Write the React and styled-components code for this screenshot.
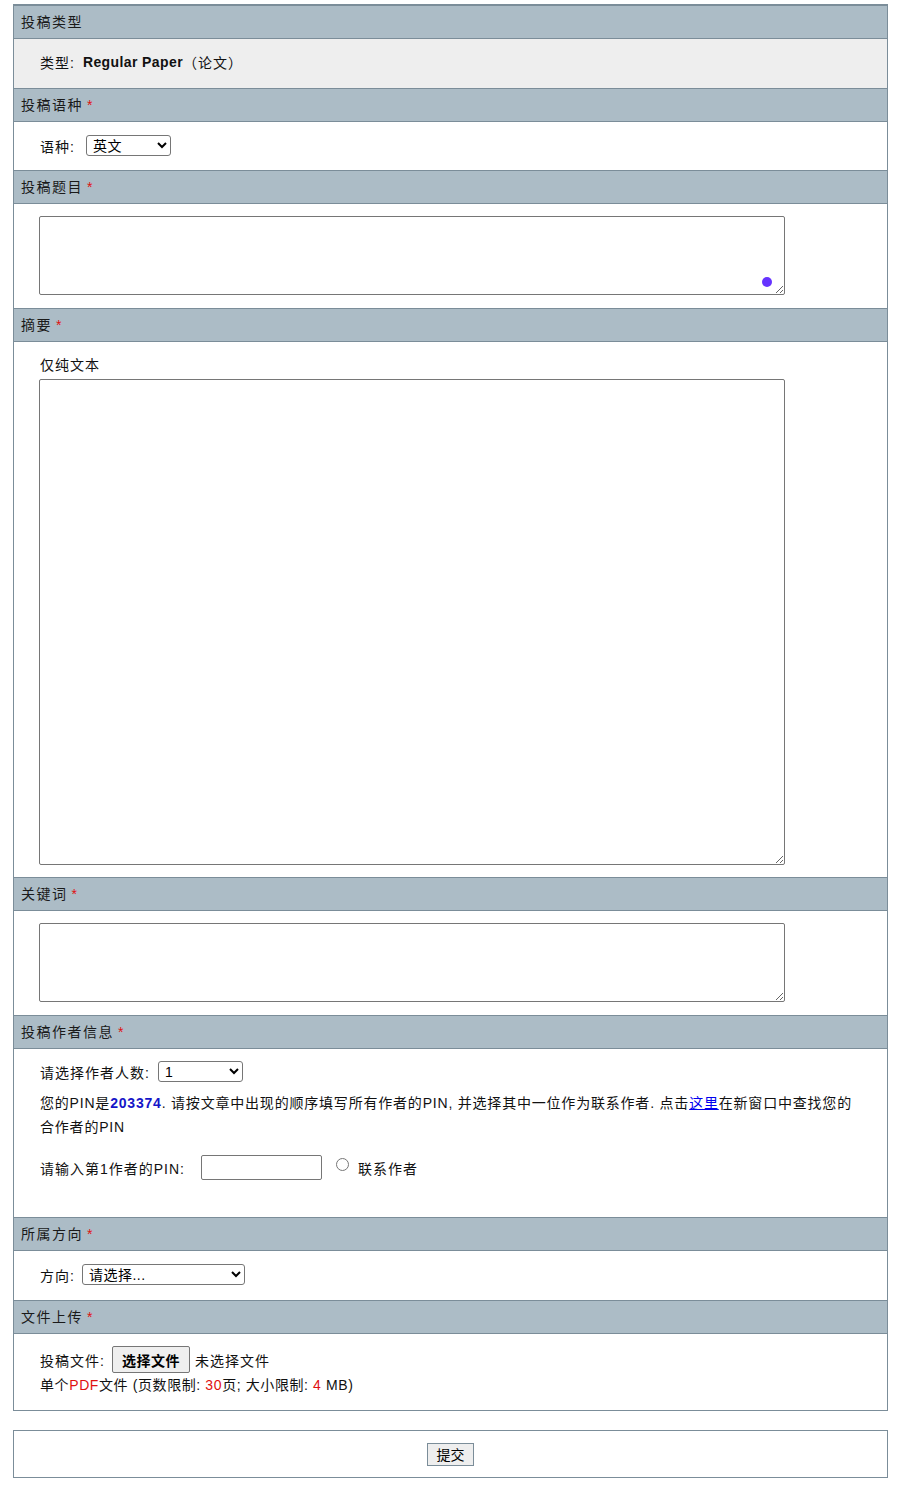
import React from 'react';
import styled, { createGlobalStyle } from 'styled-components';

const GlobalStyle = createGlobalStyle`
  body {
    margin: 0;
    background: #ffffff;
    font-family: 'Liberation Sans', 'Noto Sans CJK SC', sans-serif;
    font-size: 14px;
    color: #111;
  }
`;

const Page = styled.div`
  padding: 4px 20px 30px 13px;
  width: 875px;
`;

const Form = styled.div`
  border: 1px solid #7b8d99;
  border-top-width: 2px;
`;

const Header = styled.div`
  height: 32px;
  line-height: 32px;
  padding-left: 7px;
  background: #acbcc6;
  border-bottom: 1px solid #7b8d99;
  letter-spacing: 1.5px;
  color: #1a1a1a;
`;

const Star = styled.span`
  color: #e01010;
  margin-left: 4px;
`;

const Body = styled.div`
  padding: ${(p) => p.$pad || '14px 25px 13px'};
  background: ${(p) => (p.$grey ? '#eeeeee' : '#ffffff')};
  border-bottom: ${(p) => (p.$last ? 'none' : '1px solid #7b8d99')};
  min-height: ${(p) => p.$min || 'auto'};
  box-sizing: border-box;
`;

const Row = styled.div`
  display: flex;
  align-items: center;
  height: ${(p) => p.$h || '21px'};
  letter-spacing: 1px;
  padding-left: 1px;
`;

const Label = styled.span`
  margin-right: ${(p) => p.$gap || '6px'};
`;

const Strong = styled.b`
  letter-spacing: 0.4px;
  font-weight: 700;
`;

const Select = styled.select`
  width: ${(p) => p.$w};
  height: 21px;
  font-family: 'Liberation Sans', 'Noto Sans CJK SC', sans-serif;
  font-size: 14px;
  color: #000;
  background: #fff;
  border: 1px solid #767676;
  border-radius: 3px;
  padding: 0 2px;
  letter-spacing: 0.5px;
`;

const AreaWrap = styled.div`
  position: relative;
  width: 746px;
  height: ${(p) => p.$h};
`;

const Area = styled.textarea`
  display: block;
  width: 100%;
  height: 100%;
  box-sizing: border-box;
  border: 1px solid #767676;
  border-radius: 2px;
  resize: vertical;
  margin: 0;
`;

const Dot = styled.span`
  position: absolute;
  right: 13px;
  bottom: 8px;
  width: 10px;
  height: 10px;
  border-radius: 50%;
  background: #6633ff;
`;

const Hint = styled.div`
  padding-left: 1px;
  height: 18px;
  line-height: 18px;
  margin: 14px 0 5px;
  letter-spacing: 1px;
`;

const Note = styled.p`
  margin: 9px 0 0;
  line-height: 24px;
  letter-spacing: 0.8px;
  padding-left: 1px;
`;

const FileNote = styled.div`
  line-height: 24px;
  letter-spacing: 0.6px;
  padding-left: 1px;
`;

const Pin = styled.b`
  color: #1515c8;
`;

const Link = styled.a`
  color: #0000ee;
  text-decoration: underline;
`;

const PinInput = styled.input`
  width: 121px;
  height: 25px;
  box-sizing: border-box;
  border: 1px solid #767676;
  border-radius: 2px;
  margin: 0 14px 0 16px;
`;

const Radio = styled.input`
  margin: 0 9px 0 0;
  width: 13px;
  height: 13px;
  position: relative;
  top: -3px;
`;

const FileButton = styled.button`
  height: 27px;
  padding: 0 9px;
  margin-right: 5px;
  font-family: 'Liberation Sans', 'Noto Sans CJK SC', sans-serif;
  font-size: 14px;
  font-weight: 700;
  letter-spacing: 0.5px;
  background: #efefef;
  border: 1px solid #767676;
  border-radius: 2px;
  color: #000;
`;

const Red = styled.span`
  color: #e01010;
`;

const SubmitBox = styled.div`
  margin-top: 19px;
  border: 1px solid #7b8d99;
  height: 46px;
  display: flex;
  align-items: center;
  justify-content: center;
`;

const SubmitButton = styled.button`
  width: 47px;
  height: 23px;
  font-family: 'Liberation Sans', 'Noto Sans CJK SC', sans-serif;
  font-size: 14px;
  background: #eeeeee;
  border: 1px solid #7b8d99;
  border-radius: 0;
  color: #000;
  padding: 0;
`;

function Section({ title, required, children }) {
  return (
    <>
      <Header>
        {title}
        {required && <Star>*</Star>}
      </Header>
      {children}
    </>
  );
}

export default function App() {
  return (
    <Page>
      <GlobalStyle />
      <Form>
        <Section title="投稿类型">
          <Body $grey $pad="12px 25px 16px">
            <Row>
              <Label $gap="8px">类型:</Label>
              <Strong>Regular Paper</Strong>
              <span>（论文）</span>
            </Row>
          </Body>
        </Section>

        <Section title="投稿语种" required>
          <Body $pad="13px 25px 14px">
            <Row>
              <Label $gap="11px">语种:</Label>
              <Select $w="85px" defaultValue="en">
                <option value="en">英文</option>
                <option value="zh">中文</option>
              </Select>
            </Row>
          </Body>
        </Section>

        <Section title="投稿题目" required>
          <Body $pad="12px 25px 13px">
            <AreaWrap $h="79px">
              <Area />
              <Dot />
            </AreaWrap>
          </Body>
        </Section>

        <Section title="摘要" required>
          <Body $pad="0 25px 12px">
            <Hint>仅纯文本</Hint>
            <AreaWrap $h="486px">
              <Area />
            </AreaWrap>
          </Body>
        </Section>

        <Section title="关键词" required>
          <Body $pad="12px 25px 13px">
            <AreaWrap $h="79px">
              <Area />
            </AreaWrap>
          </Body>
        </Section>

        <Section title="投稿作者信息" required>
          <Body $pad="12px 25px 0" $min="169px">
            <Row>
              <Label $gap="8px">请选择作者人数:</Label>
              <Select $w="85px" defaultValue="1">
                {[1, 2, 3, 4, 5, 6, 7, 8].map((n) => (
                  <option key={n} value={n}>
                    {n}
                  </option>
                ))}
              </Select>
            </Row>
            <Note>
              您的PIN是<Pin>203374</Pin>. 请按文章中出现的顺序填写所有作者的PIN, 并选择其中一位作为联系作者. 点击
              <Link href="#">这里</Link>在新窗口中查找您的合作者的PIN
            </Note>
            <Row $h="25px" style={{ marginTop: '16px' }}>
              <span>请输入第1作者的PIN:</span>
              <PinInput type="text" />
              <Radio type="radio" name="contact" />
              <span>联系作者</span>
            </Row>
          </Body>
        </Section>

        <Section title="所属方向" required>
          <Body $pad="13px 25px 15px">
            <Row>
              <Label $gap="7px">方向:</Label>
              <Select $w="163px" defaultValue="">
                <option value="">请选择...</option>
              </Select>
            </Row>
          </Body>
        </Section>

        <Section title="文件上传" required>
          <Body $pad="12px 25px 13px" $last>
            <Row $h="27px">
              <Label $gap="7px">投稿文件:</Label>
              <FileButton type="button">选择文件</FileButton>
              <span>未选择文件</span>
            </Row>
            <FileNote>
              单个<Red>PDF</Red>文件 (页数限制: <Red>30</Red>页; 大小限制: <Red>4</Red> MB)
            </FileNote>
          </Body>
        </Section>
      </Form>

      <SubmitBox>
        <SubmitButton type="button">提交</SubmitButton>
      </SubmitBox>
    </Page>
  );
}
